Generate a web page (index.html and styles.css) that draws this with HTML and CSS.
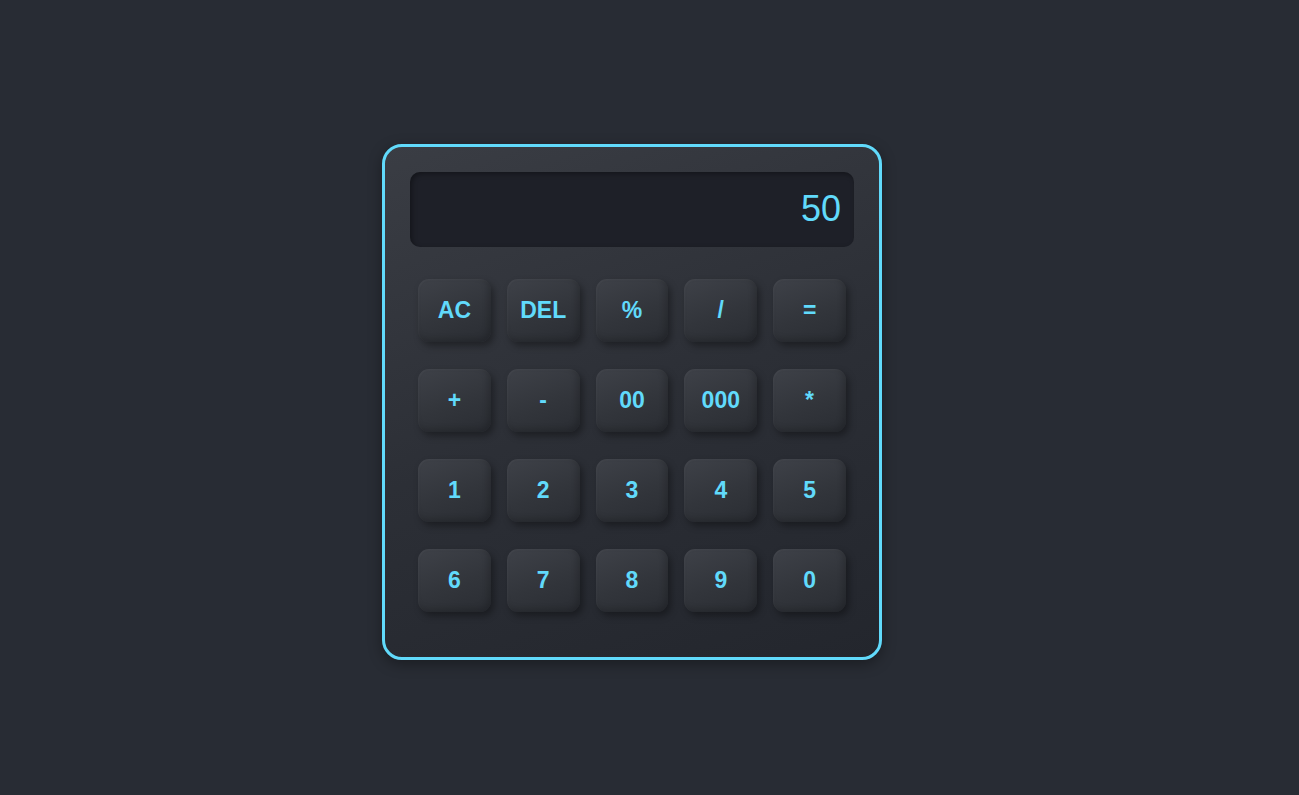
FILE: index.html
```html
<!DOCTYPE html>
<html>
<head>
<meta charset="utf-8">
<link rel="stylesheet" href="styles.css">
</head>
<body>
<div class="page">
  <div class="calc">
    <div class="display">50</div>
    <div class="keys">
      <button class="key">AC</button>
      <button class="key">DEL</button>
      <button class="key">%</button>
      <button class="key">/</button>
      <button class="key">=</button>
      <button class="key">+</button>
      <button class="key">-</button>
      <button class="key">00</button>
      <button class="key">000</button>
      <button class="key">*</button>
      <button class="key">1</button>
      <button class="key">2</button>
      <button class="key">3</button>
      <button class="key">4</button>
      <button class="key">5</button>
      <button class="key">6</button>
      <button class="key">7</button>
      <button class="key">8</button>
      <button class="key">9</button>
      <button class="key">0</button>
    </div>
  </div>
</div>
</body>
</html>
```
FILE: styles.css
```css
html, body {
  margin: 0;
  padding: 0;
  background: #282c34;
  font-family: "Liberation Sans", Arial, sans-serif;
}
.page {
  height: 795px;
  box-sizing: border-box;
  padding: 144px 0 0 382px;
}
.calc {
  width: 500px;
  box-sizing: border-box;
  border: 3px solid #61dafb;
  border-radius: 20px;
  padding: 25px 25px 26px;
  background: linear-gradient(160deg, #3a3d44 0%, #2c2f36 50%, #23262d 100%);
  box-shadow: 0 4px 14px rgba(0, 0, 0, 0.35);
}
.display {
  height: 75px;
  box-sizing: border-box;
  background: #1e2028;
  border-radius: 10px;
  color: #61dafb;
  font-size: 36px;
  text-align: right;
  padding: 0 13px;
  line-height: 74px;
  box-shadow: inset 2px 2px 5px rgba(0, 0, 0, 0.35);
}
.keys {
  margin-top: 32px;
  padding: 0 8px 19px;
  display: grid;
  grid-template-columns: repeat(5, 1fr);
  column-gap: 16px;
  row-gap: 27px;
}
.key {
  height: 63px;
  border: none;
  border-radius: 11px;
  background: linear-gradient(160deg, #3e4148 0%, #32353b 55%, #2a2d33 100%);
  color: #61dafb;
  font-family: "Liberation Sans", Arial, sans-serif;
  font-weight: bold;
  font-size: 23px;
  padding: 0;
  box-shadow: 3px 4px 7px rgba(0, 0, 0, 0.35), inset -3px -3px 6px rgba(0, 0, 0, 0.18), inset 1px 1px 2px rgba(255, 255, 255, 0.04);
}
```
